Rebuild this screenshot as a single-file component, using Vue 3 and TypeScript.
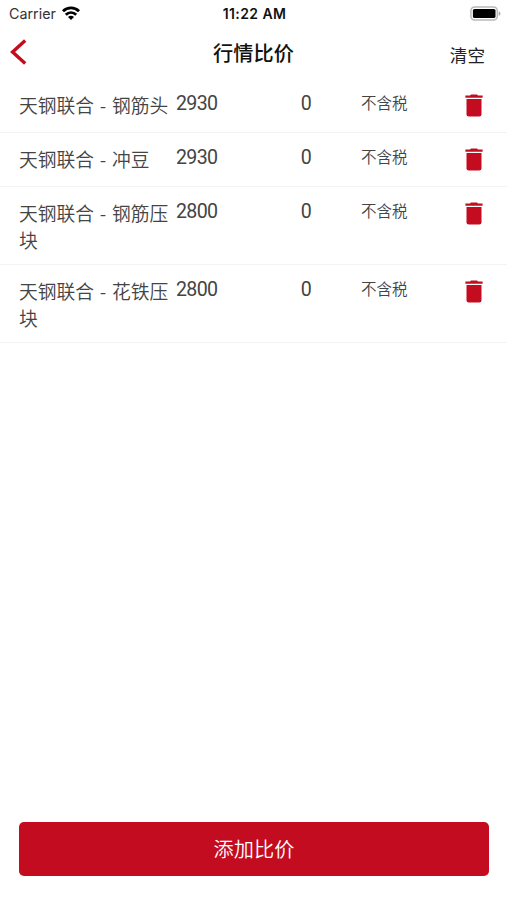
<script setup lang="ts">
interface PriceRow {
  id: number
  name: string
  price: number
  diff: number
  tax: string
}

const rows: PriceRow[] = [
  { id: 1, name: '天钢联合 - 钢筋头', price: 2930, diff: 0, tax: '不含税' },
  { id: 2, name: '天钢联合 - 冲豆', price: 2930, diff: 0, tax: '不含税' },
  { id: 3, name: '天钢联合 - 钢筋压块', price: 2800, diff: 0, tax: '不含税' },
  { id: 4, name: '天钢联合 - 花铁压块', price: 2800, diff: 0, tax: '不含税' },
]
</script>

<template>
  <div class="screen">
    <div class="status">
      <div class="carrier">
        <span>Carrier</span>
        <svg class="wifi" viewBox="0 0 18 14" width="18" height="14">
          <g fill="none" stroke="#000" stroke-width="2.8">
            <path d="M1 5.2C5.4 .8 12.6 .8 17 5.2" />
            <path d="M3.8 8.8C6.9 5.8 11.1 5.8 14.2 8.8" />
          </g>
          <path d="M6 11C7.8 9.4 10.2 9.4 12 11L9 14Z" />
        </svg>
      </div>
      <span class="time">11:22 AM</span>
      <div class="power">
        <svg viewBox="0 0 31 16" width="31" height="16">
          <rect x=".9" y="1" width="26.4" height="13" rx="3.8" fill="#fff" stroke="#b9b9b9" stroke-width="1.5" />
          <rect x="2.9" y="2.9" width="22.6" height="9.2" rx="1.6" />
          <path d="M28.7 5.2C31 6 31 9 28.7 9.8Z" fill="#aaa" />
        </svg>
      </div>
    </div>
    <header class="nav">
      <svg class="back" viewBox="0 0 18 28" width="18" height="28">
        <path d="M15.2 2.6L2.6 14.1L15.2 25.6" fill="none" stroke="#c40c20" stroke-width="3.4" />
      </svg>
      <h1 class="title">行情比价</h1>
      <span class="clear">清空</span>
    </header>
    <main class="list">
      <div v-for="row in rows" :key="row.id" class="row">
        <span class="name">{{ row.name }}</span>
        <span class="price">{{ row.price }}</span>
        <span class="diff">{{ row.diff }}</span>
        <span class="tax">{{ row.tax }}</span>
        <svg class="trash" viewBox="0 0 18 23" width="18" height="23">
          <path d="M.4 1.5H5L6 .4H12L13 1.5H17.6V3.7H.4Z" />
          <path d="M1.5 5H16.5V20.2Q16.5 22.5 14.2 22.5H3.8Q1.5 22.5 1.5 20.2Z" />
        </svg>
      </div>
    </main>
    <footer class="foot">
      <button class="add" type="button">添加比价</button>
    </footer>
  </div>
</template>

<style>
body {
  background: #fff;
}
</style>

<style scoped>
.screen {
  display: flex;
  flex-direction: column;
  width: 507px;
  height: 900px;
  background: #fff;
  color: #444;
  font-family: 'Noto Sans CJK SC', sans-serif;
  overflow: hidden;
}
.status {
  display: grid;
  grid-template-columns: 1fr auto 1fr;
  align-items: center;
  height: 27px;
  padding: 0 6px 0 9px;
  font-family: Inter, sans-serif;
  color: #111;
}
.carrier {
  display: flex;
  align-items: center;
  gap: 6px;
  font-size: 14.3px;
  color: #333;
}
.wifi {
  margin-top: -2px;
}
.time {
  margin-right: 1px;
  font-size: 14px;
  font-weight: 600;
  letter-spacing: 0.4px;
}
.power {
  display: flex;
  justify-content: flex-end;
}
.nav {
  display: grid;
  grid-template-columns: 1fr auto 1fr;
  align-items: center;
  height: 52px;
  padding: 0 22px 0 10px;
}
.back {
  margin-top: -3px;
}
.title {
  margin: -1px 0 0 12px;
  font-size: 20.2px;
  font-weight: 500;
  line-height: 30px;
  color: #111;
}
.clear {
  justify-self: end;
  margin-top: 4px;
  font-size: 17.6px;
  line-height: 26px;
  color: #222;
}
.list {
  flex: 1;
}
.row {
  box-sizing: border-box;
  display: grid;
  grid-template-columns: 157px 110px 40px 96px auto;
  align-items: start;
  min-height: 54px;
  padding: 12px 0 11px 19px;
  border-bottom: 1px solid #f3f3f3;
}
.name {
  padding-right: 7px;
  font-size: 18.75px;
  font-weight: 350;
  line-height: 27px;
  word-spacing: 1.6px;
  word-break: break-all;
}
.price,
.diff {
  font-family: Roboto, sans-serif;
  font-size: 19.6px;
  line-height: 26px;
  letter-spacing: -0.65px;
}
.diff {
  text-align: center;
}
.tax {
  justify-self: end;
  width: 61px;
  font-size: 15.5px;
  font-weight: 350;
  line-height: 22px;
}
.trash {
  margin: 3px 0 0 43px;
  fill: #c40c20;
}
.foot {
  padding: 0 18px 24px 19px;
}
.add {
  display: block;
  width: 100%;
  height: 54px;
  padding: 0;
  border: 0;
  border-radius: 5px;
  background: #c40c20;
  color: #fff;
  font: 350 20.2px/54px 'Noto Sans CJK SC', sans-serif;
}
</style>
